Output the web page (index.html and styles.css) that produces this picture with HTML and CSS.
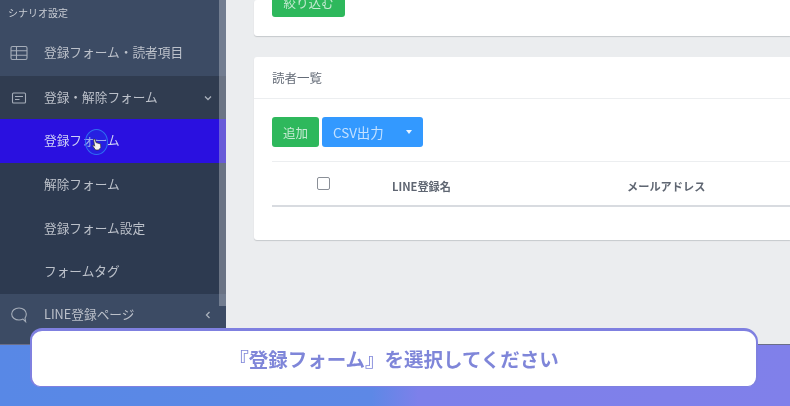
FILE: index.html
```html
<!DOCTYPE html>
<html lang="ja">

<head>
	<meta charset="utf-8">
	<title>登録フォーム</title>
	<link rel="stylesheet" href="styles.css">
</head>

<body>
	<div class="app">
		<aside class="sidebar">
			<div class="side-title">シナリオ設定</div>
			<div class="nav-item nav-first">
				<svg class="nav-icon" width="18" height="16" viewBox="0 0 18 16" fill="none" stroke="currentColor" stroke-width="1.1">
					<rect x="1" y="1.5" width="16" height="13" rx="1.5"></rect>
					<path d="M1 5.8H17M1 10.2H17M6.5 1.5V14.5"></path>
				</svg>
				<span>登録フォーム・読者項目</span>
			</div>
			<div class="nav-item nav-open">
				<svg class="nav-icon" width="16" height="14" viewBox="0 0 16 14" fill="none" stroke="currentColor" stroke-width="1.1">
					<rect x="1.5" y="2" width="13" height="10" rx="1"></rect>
					<path d="M4 5.5H12M4 8.5H8.5"></path>
				</svg>
				<span>登録・解除フォーム</span>
				<svg class="nav-arrow" width="8" height="8" viewBox="0 0 8 8" fill="none" stroke="currentColor" stroke-width="1.3">
					<path d="M1 2.5L4 5.5L7 2.5"></path>
				</svg>
			</div>
			<div class="sub-list">
				<div class="sub-item sub-active">登録フォーム</div>
				<div class="sub-item">解除フォーム</div>
				<div class="sub-item">登録フォーム設定</div>
				<div class="sub-item">フォームタグ</div>
			</div>
			<div class="nav-item nav-last">
				<svg class="nav-icon" width="18" height="18" viewBox="0 0 18 18" fill="none" stroke="currentColor" stroke-width="1.1">
					<path d="M9 2C4.8 2 1.7 4.6 1.7 8C1.7 11.4 4.8 14 9 14C10.4 14 11.9 13.7 13 13.1L15.6 15.6L15 12.2C15.9 11 16.3 9.6 16.3 8C16.3 4.6 13.2 2 9 2Z"></path>
				</svg>
				<span>LINE登録ページ</span>
				<svg class="nav-arrow" width="8" height="8" viewBox="0 0 8 8" fill="none" stroke="currentColor" stroke-width="1.3">
					<path d="M5.5 1L2.5 4L5.5 7"></path>
				</svg>
			</div>
			<div class="side-scroll"></div>
			<div class="click-mark">
				<svg width="12" height="13" viewBox="0 0 12 13">
					<path d="M2.5 1.2L4 1L5 4.6L9.6 6L9.8 9.6L7.6 12H4.6L1.4 7.6L2.9 7.2L3.7 8.2Z" fill="#f4f2f0" stroke="#333" stroke-width="0.7"></path>
				</svg>
			</div>
		</aside>

		<main class="content">
			<section class="card card-top">
				<button class="btn btn-green btn-filter">絞り込む</button>
			</section>

			<section class="card card-list">
				<div class="card-head">読者一覧</div>
				<div class="card-body">
					<div class="toolbar">
						<button class="btn btn-green btn-add">追加</button>
						<button class="btn btn-blue btn-csv">
							<span>CSV出力</span>
							<i class="caret"></i>
						</button>
					</div>
					<div class="table-head">
						<div class="col-check"><i class="checkbox"></i></div>
						<div class="col-name">LINE登録名</div>
						<div class="col-mail">メールアドレス</div>
					</div>
				</div>
			</section>
		</main>
	</div>

	<div class="band">
		<div class="caption">『登録フォーム』を選択してください</div>
	</div>
</body>

</html>
```

FILE: styles.css
```css
* {
	box-sizing: border-box;
}

html,
body {
	height: 100%;
}

body {
	margin: 0;
	width: 790px;
	height: 406px;
	overflow: hidden;
	position: relative;
	font-family: "Noto Sans CJK JP", "Noto Sans", sans-serif;
}

.app {
	display: flex;
	height: 344px;
	background-color: #ebedef;
	filter: blur(0.5px);
}

/* サイドバー */
.sidebar {
	position: relative;
	flex: 0 0 226px;
	background-color: #3c4b64;
	color: #bcc1ca;
	font-size: 12.7px;
}

.side-title {
	height: 30px;
	padding: 5px 0 0 8px;
	font-size: 10px;
	line-height: 16px;
	color: #c9cdd4;
}

.nav-item {
	display: flex;
	align-items: center;
	padding-right: 14px;
}

.nav-item span {
	flex: 1;
	margin-bottom: 3px;
}

.nav-icon {
	flex: 0 0 18px;
	margin: 0 16px 0 10px;
	color: #a5adb9;
}

.nav-arrow {
	color: #aab1bc;
}

.nav-first {
	height: 46px;
}

.nav-open {
	height: 43px;
	background-color: #303c50;
}

.nav-last {
	height: 49px;
	padding-bottom: 7px;
}

.sub-list {
	background-color: #2d3a50;
}

.sub-item {
	height: 43.75px;
	padding-left: 44px;
	line-height: 42px;
}

.sub-active {
	background-color: #2a10e0;
	color: #cfd2f5;
}

.side-scroll {
	position: absolute;
	top: 0;
	right: 0;
	width: 7px;
	height: 306px;
	background-color: rgba(190, 195, 205, 0.42);
}

.click-mark {
	position: absolute;
	left: 85px;
	top: 129px;
	width: 23px;
	height: 26px;
	padding: 8px 0 0 5px;
	border: 1px solid #2f6ff0;
	border-radius: 50%;
	background-color: rgba(30, 70, 230, 0.3);
	line-height: 0;
}

/* メイン */
.content {
	flex: 1;
	padding-left: 28px;
}

.card {
	background-color: #fff;
	border-radius: 3px 0 0 3px;
	box-shadow: 0 1px 1px #c6c9cc;
}

.card-top {
	height: 36px;
	padding-left: 18px;
	overflow: hidden;
}

.card-list {
	height: 183px;
	margin-top: 21px;
}

.btn {
	display: block;
	border: none;
	border-radius: 3px;
	padding: 0;
	font-family: inherit;
	font-size: 12.5px;
}

.btn-green {
	background-color: #2eb85c;
	color: #c5ead2;
}

.btn-blue {
	background-color: #3399ff;
	color: #c4e1ff;
	font-size: 13.4px;
}

.btn-filter {
	width: 73px;
	height: 30px;
	margin-top: -13px;
}

.card-head {
	height: 42px;
	padding-left: 18px;
	border-bottom: 1px solid #eceef0;
	color: #656c78;
	font-size: 12.5px;
	line-height: 41px;
}

.card-body {
	padding: 18px 0 0 18px;
}

.toolbar {
	display: flex;
	gap: 3px;
	height: 30px;
}

.btn-add {
	width: 47px;
}

.btn-csv {
	display: flex;
	align-items: center;
	width: 101px;
	padding: 0 11px 0 11px;
	justify-content: space-between;
}

.caret {
	border-top: 4px solid #eaf4ff;
	border-left: 3.5px solid transparent;
	border-right: 3.5px solid transparent;
}

.table-head {
	display: flex;
	align-items: center;
	height: 46px;
	margin-top: 14px;
	padding-top: 4px;
	border-top: 1px solid #eceef0;
	border-bottom: 2px solid #d8dbe0;
	color: #5f6672;
	font-size: 11.2px;
	font-weight: 700;
}

.col-check {
	flex: 0 0 120px;
	padding: 0 0 5px 45px;
	line-height: 0;
}

.col-name {
	flex: 0 0 235px;
}

.checkbox {
	display: inline-block;
	width: 13px;
	height: 13px;
	border: 1px solid #8a8f97;
	border-radius: 2px;
	background-color: #fff;
}

/* テロップ */
.band {
	height: 62px;
	background: linear-gradient(90deg, #5888e6 0%, #5d88e6 47%, #7d80ea 53%, #8080ea 100%);
	box-shadow: inset 0 1px #6a6e88;
}

.caption {
	position: absolute;
	left: 30px;
	top: 328px;
	width: 728px;
	height: 59px;
	border: 2px solid #7f80e0;
	border-top-width: 3px;
	border-bottom-width: 1px;
	border-radius: 12px 14px 10px 10px;
	background-color: #fff;
	color: #7f86d9;
	font-size: 19.5px;
	font-weight: 700;
	line-height: 55px;
	text-align: center;
	filter: blur(0.3px);
}
```
